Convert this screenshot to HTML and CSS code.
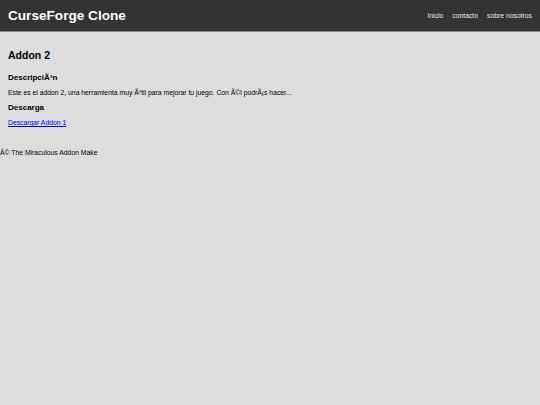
FILE: index.html
```html
<!DOCTYPE html>
<html lang="es">
<head>
<meta charset="utf-8">
<title>CurseForge Clone</title>
<link rel="stylesheet" href="styles.css">
</head>
<body>
<header class="site-header">
  <h1 class="brand">CurseForge Clone</h1>
  <nav class="nav">
    <a href="#">Inicio</a>
    <a href="#">contacto</a>
    <a href="#">sobre nosotros</a>
  </nav>
</header>
<main class="content">
  <h2 class="title">Addon 2</h2>
  <h3 class="section">DescripciÃ³n</h3>
  <p class="text">Este es el addon 2, una herramienta muy Ãºtil para mejorar tu juego. Con Ã©l podrÃ¡s hacer...</p>
  <h3 class="section">Descarga</h3>
  <p class="text"><a class="download" href="#">Descargar Addon 1</a></p>
</main>
<footer class="site-footer">
  <p class="text">Â© The Miraculous Addon Make</p>
</footer>
</body>
</html>
```
FILE: styles.css
```css
html, body {
  margin: 0;
  padding: 0;
  background: #dddddd;
  font-family: "Liberation Sans", Arial, sans-serif;
  color: #000;
}
.site-header {
  background: #333333;
  color: #fff;
  height: 31px;
  border-bottom: 1px solid #8a8a8a;
  display: flex;
  align-items: center;
  justify-content: space-between;
  padding: 0 8px;
}
.brand {
  margin: 0;
  font-size: 13.6px;
  font-weight: bold;
}
.nav {
  display: flex;
  gap: 9px;
}
.nav a {
  color: #e8e8e8;
  text-decoration: none;
  font-size: 6.8px;
}
.content {
  padding: 17px 8px 0;
}
.title {
  font-size: 10.5px;
  line-height: 12px;
  margin: 0 0 12px;
}
.section {
  font-size: 8px;
  line-height: 9px;
  margin: 0 0 7px;
}
.text {
  font-size: 6.8px;
  line-height: 8px;
  margin: 0 0 6px;
}
.download {
  color: #0000ee;
}
.site-footer {
  padding-top: 16px;
}
```
